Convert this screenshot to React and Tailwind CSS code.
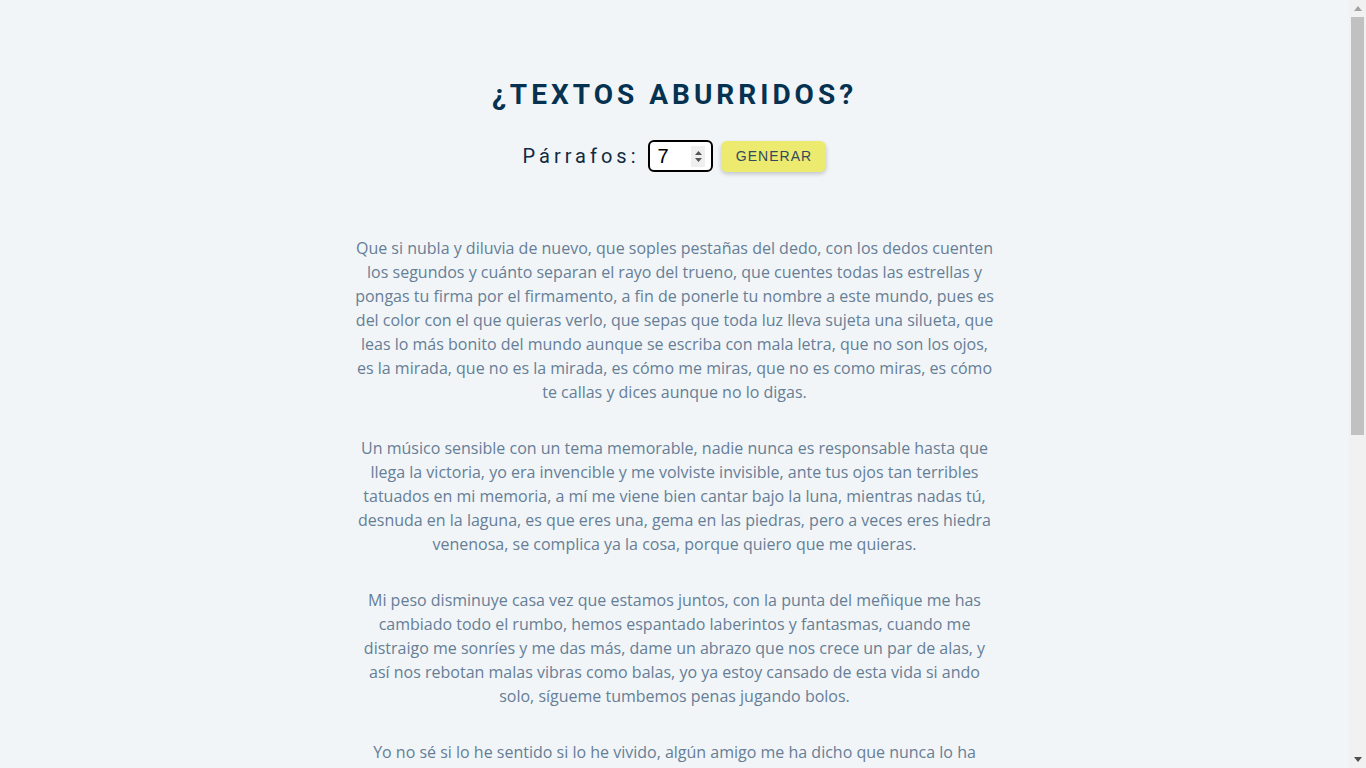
import React from "react";

const paras = [
  "Que si nubla y diluvia de nuevo, que soples pestañas del dedo, con los dedos cuenten los segundos y cuánto separan el rayo del trueno, que cuentes todas las estrellas y pongas tu firma por el firmamento, a fin de ponerle tu nombre a este mundo, pues es del color con el que quieras verlo, que sepas que toda luz lleva sujeta una silueta, que leas lo más bonito del mundo aunque se escriba con mala letra, que no son los ojos, es la mirada, que no es la mirada, es cómo me miras, que no es como miras, es cómo te callas y dices aunque no lo digas.",
  "Un músico sensible con un tema memorable, nadie nunca es responsable hasta que llega la victoria, yo era invencible y me volviste invisible, ante tus ojos tan terribles tatuados en mi memoria, a mí me viene bien cantar bajo la luna, mientras nadas tú, desnuda en la laguna, es que eres una, gema en las piedras, pero a veces eres hiedra venenosa, se complica ya la cosa, porque quiero que me quieras.",
  "Mi peso disminuye casa vez que estamos juntos, con la punta del meñique me has cambiado todo el rumbo, hemos espantado laberintos y fantasmas, cuando me distraigo me sonríes y me das más, dame un abrazo que nos crece un par de alas, y así nos rebotan malas vibras como balas, yo ya estoy cansado de esta vida si ando solo, sígueme tumbemos penas jugando bolos.",
  "Yo no sé si lo he sentido si lo he vivido, algún amigo me ha dicho que nunca lo ha visto tan claro, que lo raro es que no lo haya entendido antes, que los instantes se escapan como el agua entre los dedos, y que el miedo solo es un nombre más para las cosas que no conocemos todavía.",
  "Y si me pierdo en el camino que me encuentre tu sonrisa, que la prisa no nos gane y que la brisa nos despeine, que reine la calma en el alma cuando llueva, que nos lleve la marea a donde nadie nos conozca.",
  "Cuéntame otra vez la historia de la noche en que nos vimos, de los ríos que cruzamos y los ruidos que dejamos, que las manos se nos llenan de recuerdos y de tiempo, que el momento es solo nuestro aunque el mundo siga andando.",
  "Que la vida es una rueda que no para de girar, que hay que dar para que vuelva y aprender a perdonar, que mañana será otro día y hoy todavía es hoy, y que voy a donde vayas mientras quieras que yo vaya.",
];

function FakeScrollbar() {
  return (
    <div className="fixed top-0 right-0 w-[17px] h-screen bg-[#f1f1f1] flex flex-col items-center">
      <div className="h-[17px] w-full flex items-center justify-center">
        <svg width="8" height="5" viewBox="0 0 8 5"><path d="M0 5 L4 0 L8 5 Z" fill="#a3a3a3" /></svg>
      </div>
      <div className="w-[13px] h-[418px] bg-[#c1c1c1]" />
      <div className="flex-1" />
      <div className="h-[17px] w-full flex items-center justify-center">
        <svg width="8" height="5" viewBox="0 0 8 5"><path d="M0 0 L4 5 L8 0 Z" fill="#505050" /></svg>
      </div>
    </div>
  );
}

export default function App() {
  return (
    <div className="min-h-screen bg-[#f1f5f8] pr-[17px]" style={{ fontFamily: "'Open Sans', sans-serif" }}>
      <section className="w-[90vw] max-w-[640px] mx-auto pt-[77px] pb-20 text-center">
        <h3 className="font-['Roboto',sans-serif] font-bold text-[28px] leading-[1.25] tracking-[4px] uppercase text-[#063251] m-0">
          ¿Textos aburridos?
        </h3>
        <form className="flex justify-center items-center mt-[28px]" onSubmit={(e) => e.preventDefault()}>
          <label className="font-['Roboto',sans-serif] text-[20px] tracking-[4px] text-[#102a42]">Párrafos:</label>
          <div className="ml-[9px] w-[65px] h-[32px] rounded-[6px] border-2 border-black bg-white flex items-center pl-[7px] pr-[6px]">
            <span className="flex-1 text-left font-['Liberation_Sans',sans-serif] text-[20px] leading-none text-black">7</span>
            <span className="flex flex-col items-center justify-center w-[14px] h-[21px] bg-[#efefef] gap-[3px]">
              <svg width="7" height="4" viewBox="0 0 7 4"><path d="M0 4 L3.5 0 L7 4 Z" fill="#555" /></svg>
              <svg width="7" height="4" viewBox="0 0 7 4"><path d="M0 0 L3.5 4 L7 0 Z" fill="#555" /></svg>
            </span>
          </div>
          <button type="submit" className="ml-[8px] w-[105px] h-[31px] rounded-[6px] bg-[#eceb6f] text-[#34495e] font-['Liberation_Sans',sans-serif] text-[14px] tracking-[1px] uppercase shadow-[0_2px_4px_rgba(0,0,0,0.2)]">
            Generar
          </button>
        </form>
        <article className="mt-[64px]">
          {paras.map((p, i) => (
            <p key={i} className="text-[16px] leading-[24px] text-[#667e96] mb-8">{p}</p>
          ))}
        </article>
      </section>
      <FakeScrollbar />
    </div>
  );
}
